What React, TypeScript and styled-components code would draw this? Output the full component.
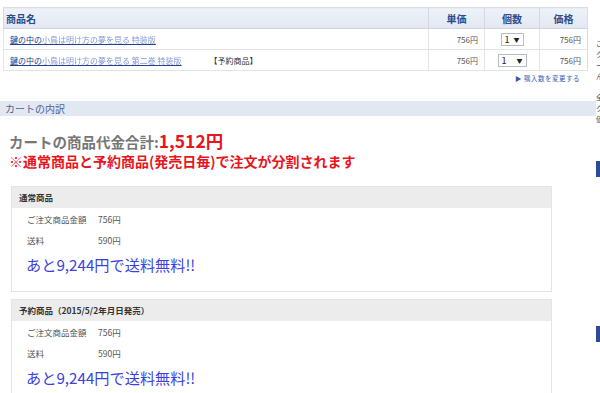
import React from "react";
import styled, { createGlobalStyle } from "styled-components";

const GlobalStyle = createGlobalStyle`
  html, body {
    margin: 0;
    padding: 0;
    background: #fff;
  }
  body {
    font-family: "Noto Sans CJK JP", "Liberation Sans", sans-serif;
    color: #444;
  }
`;

type CartItem = {
  id: number;
  head: string;
  rest: string;
  reserve: boolean;
  unitPrice: string;
  qty: number;
  price: string;
};

type Breakdown = {
  id: number;
  title: string;
  subtotal: string;
  shipping: string;
  remain: string;
};

const items: Array<CartItem> = [
  { id: 1, head: "鍵の中の", rest: "小鳥は明け方の夢を見る 特装版", reserve: false, unitPrice: "756円", qty: 1, price: "756円" },
  { id: 2, head: "鍵の中の", rest: "小鳥は明け方の夢を見る 第二巻 特装版", reserve: true, unitPrice: "756円", qty: 1, price: "756円" },
];

const breakdowns: Array<Breakdown> = [
  { id: 1, title: "通常商品", subtotal: "756円", shipping: "590円", remain: "9,244円" },
  { id: 2, title: "予約商品（2015/5/2年月日発売）", subtotal: "756円", shipping: "590円", remain: "9,244円" },
];

// レイアウト
const Page = styled.div`
  display: flex;
  width: 600px;
  height: 393px;
  overflow: hidden;
`;

const Main = styled.div`
  width: 596px;
  flex-shrink: 0;
`;

const Side = styled.div`
  display: flex;
  flex-direction: column;
  width: 40px;
  flex-shrink: 0;
  padding-top: 38px;
  font-size: 7px;
  line-height: 11px;
  color: #555;
`;

const SideText = styled.span<{ $mt?: number }>`
  margin-top: ${(p) => p.$mt || 0}px;
`;

const SideBlock = styled.div<{ $mt: number }>`
  margin-top: ${(p) => p.$mt}px;
  width: 20px;
  height: 16px;
  background: #2d4a94;
`;

// 商品テーブル
const Table = styled.table`
  margin: 7px 0 0 3px;
  width: 585px;
  border-collapse: collapse;
  border: 1px solid #dadde3;
  font-size: 8px;
`;

const Th = styled.th<{ $w?: number; $align?: string }>`
  height: 20px;
  padding: 0 2px;
  width: ${(p) => (p.$w ? `${p.$w}px` : "auto")};
  text-align: ${(p) => p.$align || "center"};
  font-size: 10px;
  font-weight: bold;
  color: #2b4d8f;
  background: linear-gradient(#eef2f8, #e2e8f2);
  border-left: 1px solid #d2d8e2;
  border-bottom: 1px solid #cfd5df;
`;

const Td = styled.td<{ $align?: string }>`
  height: 20px;
  padding: 0 6px;
  text-align: ${(p) => p.$align || "left"};
  color: #555;
  border-left: 1px solid #e0e3e8;
  border-bottom: 1px solid #e0e3e8;
  white-space: nowrap;
`;

const ItemLink = styled.a`
  color: #24408f;
  text-decoration: underline;
`;

const Blurred = styled.span`
  color: #8399d6;
  filter: blur(0.7px);
`;

const ReserveTag = styled.span`
  margin-left: 28px;
  color: #333;
`;

const Select = styled.span<{ $w: number }>`
  display: inline-flex;
  align-items: center;
  justify-content: space-between;
  box-sizing: border-box;
  width: ${(p) => p.$w}px;
  height: 13px;
  padding: 0 3px;
  border: 1px solid #b9bcc2;
  background: #fff;
  color: #222;
  font-size: 9px;

  &::after {
    content: "▼";
    font-size: 6px;
  }
`;

const ChangeRow = styled.div`
  width: 580px;
  margin-top: 2px;
  text-align: right;
  font-size: 6.5px;
  color: #3a5aa8;
  letter-spacing: 0.5px;
`;

// カートの内訳
const SectionBar = styled.div`
  margin-top: 18px;
  height: 15px;
  padding-left: 5px;
  background: #e2e8f2;
  color: #4f6394;
  font-size: 10px;
  line-height: 15px;
`;

const TotalLine = styled.div`
  margin: 15px 0 0 9px;
  font-size: 14.5px;
  font-weight: bold;
  color: #777;
  line-height: 20px;
`;

const Amount = styled.span`
  color: #e8141e;
  font-size: 17.5px;
`;

const Notice = styled.div`
  margin-left: 9px;
  font-size: 14px;
  font-weight: bold;
  color: #e8141e;
  line-height: 18px;
  white-space: nowrap;
`;

const Box = styled.div<{ $mt: number }>`
  margin: ${(p) => p.$mt}px 0 0 11px;
  width: 539px;
  border: 1px solid #e4e4e4;
  padding-bottom: 17px;
`;

const BoxHead = styled.div`
  height: 21px;
  padding-left: 7px;
  background: #ececec;
  font-size: 8.5px;
  font-weight: bold;
  color: #333;
  line-height: 21px;
`;

const BoxRow = styled.div`
  display: flex;
  height: 21px;
  align-items: center;
  padding-left: 15px;
  font-size: 8.5px;
  color: #555;
`;

const RowLabel = styled.span`
  width: 71px;
`;

const FreeShip = styled.div`
  margin-top: 4px;
  padding-left: 14px;
  font-size: 15.2px;
  color: #3b3fe0;
  line-height: 20px;
`;

export default function App() {
  return (
    <>
      <GlobalStyle />
      <Page>
        <Main>
          <Table>
            <thead>
              <tr>
                <Th $align="left">商品名</Th>
                <Th $w={51}>単価</Th>
                <Th $w={50}>個数</Th>
                <Th $w={43}>価格</Th>
              </tr>
            </thead>
            <tbody>
              {items.map((item) => (
                <tr key={item.id}>
                  <Td>
                    <ItemLink>
                      {item.head}
                      <Blurred>{item.rest}</Blurred>
                    </ItemLink>
                    {item.reserve && <ReserveTag>【予約商品】</ReserveTag>}
                  </Td>
                  <Td $align="right">{item.unitPrice}</Td>
                  <Td $align="center">
                    <Select $w={item.reserve ? 29 : 23}>{item.qty}</Select>
                  </Td>
                  <Td $align="right">{item.price}</Td>
                </tr>
              ))}
            </tbody>
          </Table>
          <ChangeRow>▶ 購入数を変更する</ChangeRow>

          <SectionBar>カートの内訳</SectionBar>
          <TotalLine>
            カートの商品代金合計:<Amount>1,512円</Amount>
          </TotalLine>
          <Notice>※通常商品と予約商品(発売日毎)で注文が分割されます</Notice>

          {breakdowns.map((b, i) => (
            <Box key={b.id} $mt={i === 0 ? 16 : 7}>
              <BoxHead>{b.title}</BoxHead>
              <BoxRow>
                <RowLabel>ご注文商品金額</RowLabel>
                {b.subtotal}
              </BoxRow>
              <BoxRow>
                <RowLabel>送料</RowLabel>
                {b.shipping}
              </BoxRow>
              <FreeShip>あと{b.remain}で送料無料!!</FreeShip>
            </Box>
          ))}
        </Main>
        <Side>
          <SideText>ご</SideText>
          <SideText>ク</SideText>
          <SideText>ー</SideText>
          <SideText>ん</SideText>
          <SideText $mt={10}>全</SideText>
          <SideText>ク</SideText>
          <SideText>価</SideText>
          <SideBlock $mt={36} />
          <SideBlock $mt={149} />
        </Side>
      </Page>
    </>
  );
}
